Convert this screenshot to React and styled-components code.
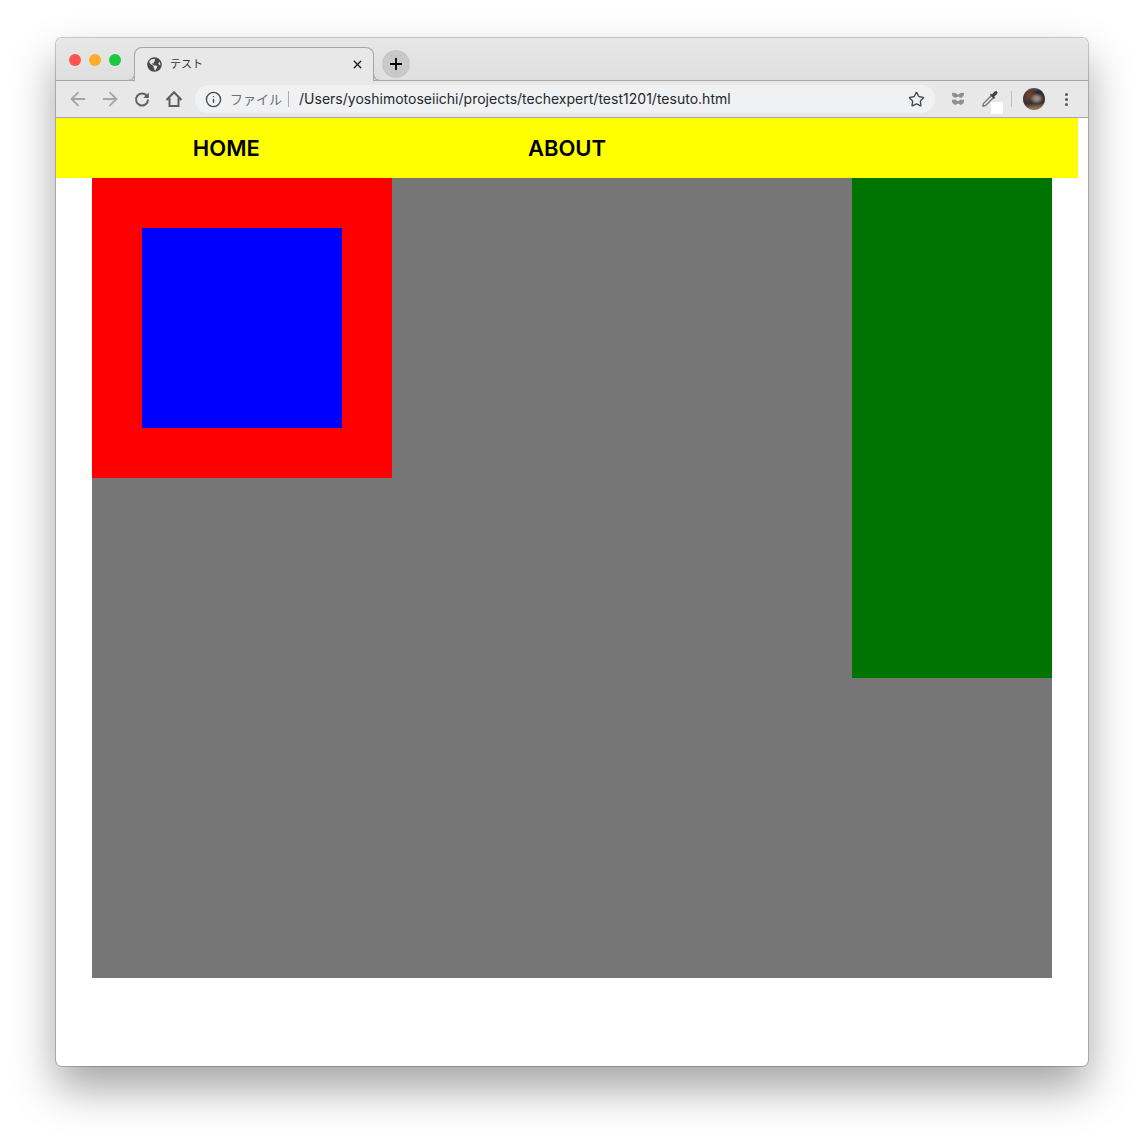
import React from 'react';
import styled, { createGlobalStyle } from 'styled-components';
import { ArrowLeft, ArrowRight, Info, Star, X, Plus } from 'lucide-react';
import { FaGlobeAmericas } from 'react-icons/fa';

const GlobalStyle = createGlobalStyle`
  html, body { margin: 0; padding: 0; background: #fff; }
  body { font-family: Inter, "Noto Sans CJK JP", sans-serif; }
`;

const Page = styled.div`
  width: 1144px;
  height: 1140px;
  padding: 38px 56px 74px;
  box-sizing: border-box;
  overflow: hidden;
`;

const Win = styled.div`
  width: 1032px;
  height: 1028px;
  background: #fff;
  border-radius: 6px;
  box-shadow: 0 0 0 1px rgba(0, 0, 0, 0.2), 0 22px 44px rgba(0, 0, 0, 0.36);
`;

const TabStrip = styled.div`
  height: 43px;
  box-sizing: border-box;
  display: flex;
  background: linear-gradient(#e7e7e7, #dfdfdf);
  border-bottom: 1px solid #a6a6a6;
  border-radius: 6px 6px 0 0;
`;

const Lights = styled.div`
  width: 78px;
  box-sizing: border-box;
  padding: 16px 0 0 13px;
  display: flex;
  gap: 8px;
`;

const Light = styled.span`
  width: 12px;
  height: 12px;
  border-radius: 50%;
  background: ${p => p.$color};
`;

const Tab = styled.div`
  position: relative;
  width: 240px;
  height: 34px;
  margin-top: 9px;
  box-sizing: border-box;
  padding: 0 9px 0 12px;
  display: flex;
  align-items: center;
  background: #e8e8e8;
  border: 1px solid #a6a6a6;
  border-bottom: none;
  border-radius: 8px 8px 0 0;
  color: #46484c;

  &::before, &::after {
    content: '';
    position: absolute;
    bottom: 0;
    width: 7px;
    height: 7px;
    background: #dfdfdf;
    border-bottom: 1px solid #a6a6a6;
  }
  &::before {
    left: -8px;
    border-right: 1px solid #a6a6a6;
    border-radius: 0 0 7px 0;
  }
  &::after {
    right: -8px;
    border-left: 1px solid #a6a6a6;
    border-radius: 0 0 0 7px;
  }
`;

const TabTitle = styled.span`
  flex: 1;
  margin: 0 0 4px 8px;
  font: 11px "Noto Sans CJK JP", sans-serif;
  color: #333;
`;

const NewTab = styled.div`
  width: 28px;
  height: 28px;
  margin: 12px 0 0 8px;
  border-radius: 50%;
  background: #c9c9c9;
  display: flex;
  align-items: center;
  justify-content: center;
`;

const Toolbar = styled.div`
  height: 37px;
  box-sizing: border-box;
  padding-left: 6px;
  display: flex;
  align-items: center;
  background: #e8e8e8;
  border-bottom: 1px solid #a6a6a6;
`;

const ToolBtn = styled.div`
  position: relative;
  width: 32px;
  height: 32px;
  flex: none;
  display: flex;
  align-items: center;
  justify-content: center;
  color: ${p => p.$color || '#5b5e62'};
`;

const Address = styled.div`
  width: 740px;
  height: 28px;
  margin: 0 7px 0 5px;
  box-sizing: border-box;
  padding: 0 10px 0 10px;
  flex: none;
  display: flex;
  align-items: center;
  background: #f0f1f3;
  border-radius: 14px;
  color: #46484c;
`;

const Scheme = styled.span`
  margin: 0 6px 2px 8px;
  font: 13px/15px "Noto Sans CJK JP", sans-serif;
  color: #6b6e72;
`;

const SchemeLine = styled.span`
  width: 1px;
  height: 16px;
  flex: none;
  background: #a9abae;
`;

const Url = styled.span`
  flex: 1;
  margin: 0 0 2px 10px;
  font: 14px Inter, sans-serif;
  letter-spacing: 0.01px;
  color: #26282b;
  white-space: nowrap;
`;

const WhiteBadge = styled.span`
  position: absolute;
  left: 17px;
  top: 19px;
  width: 12px;
  height: 12px;
  background: #fff;
  border-radius: 1px;
`;

const Sep = styled.span`
  width: 1px;
  height: 16px;
  margin: 0 11px 0 5px;
  background: #bdbdbd;
`;

const Avatar = styled.span`
  width: 22px;
  height: 22px;
  flex: none;
  border-radius: 50%;
  background:
    radial-gradient(ellipse at 62% 48%, #a09488 0, #8d8378 14%, transparent 34%),
    radial-gradient(circle at 30% 30%, #7a4630 0, transparent 35%),
    linear-gradient(175deg, #4e6a70 0, #2f2a2a 22%, #4a3330 48%, #3a3230 68%, #8a7350 88%);
`;

const Kebab = styled.div`
  width: 3px;
  margin-left: 20px;
  display: flex;
  flex-direction: column;
  gap: 2px;
  & > span {
    width: 3px;
    height: 3px;
    border-radius: 50%;
    background: #54575b;
  }
`;

const Nav = styled.ul`
  width: 1022px;
  height: 60px;
  margin: 0;
  padding: 0;
  list-style: none;
  display: grid;
  grid-template-columns: repeat(3, 1fr);
  background: #ff0;
`;

const NavItem = styled.li`
  text-align: center;
  font: 600 22px/60px Inter, sans-serif;
  color: #000;
`;

const Container = styled.div`
  width: 960px;
  height: 800px;
  margin-left: 36px;
  display: flex;
  justify-content: space-between;
  align-items: flex-start;
  background: #767676;
`;

const RedBox = styled.div`
  padding: 50px;
  background: #f00;
`;

const BlueBox = styled.div`
  width: 200px;
  height: 200px;
  background: #00f;
`;

const GreenBox = styled.div`
  width: 200px;
  height: 500px;
  background: #007400;
`;

const ReloadIcon = () => (
  <svg width="18" height="18" viewBox="0 0 18 18" fill="none">
    <path d="M14 6.200A6 6 0 1 0 15 9.500" stroke="currentColor" strokeWidth="2" />
    <path d="M15.800 2.500v5.500h-5.500z" fill="currentColor" />
  </svg>
);

const HomeIcon = () => (
  <svg width="18" height="18" viewBox="0 0 18 18" fill="none" stroke="currentColor" strokeWidth="2">
    <path d="M1.500 10 9 2.200 16.500 10M4.500 8v8h9V8" />
  </svg>
);

const ExtensionIcon = () => (
  <svg width="14" height="14" viewBox="0 0 14 14" fill="currentColor">
    <path d="M.8 1 4 .8l3 2L10 .8l3.200.2-.6 3L10 6 7 4.500 4 6 1.400 4z" />
    <path d="M.8 8 4 7.500l3 1.800 3-1.800 3.200.5-.6 3L10 13l-3-1.500L4 13l-2.600-2z" />
  </svg>
);

const Dropper = () => (
  <svg width="18" height="18" viewBox="0 0 18 18" fill="none">
    <path d="M10.500 5.500 2.500 13.500 2 16l2.500-.5L12.500 7.500" stroke="#77797c" strokeWidth="1.500" fill="#f4f4f4" />
    <path d="M9 5 13 9l1.200-1.200-1.100-1.100 2.900-2.800a1.600 1.600 0 0 0-2.300-2.300l-2.800 2.900-1-1z" fill="#3f4144" />
  </svg>
);

export default function App() {
  return (
    <Page>
      <GlobalStyle />
      <Win>
        <TabStrip>
          <Lights>
            <Light $color="#ff5350" />
            <Light $color="#fdad2a" />
            <Light $color="#1dc63f" />
          </Lights>
          <Tab>
            <FaGlobeAmericas size={15} />
            <TabTitle>テスト</TabTitle>
            <X size={13} strokeWidth={2.4} color="#111" />
          </Tab>
          <NewTab><Plus size={18} strokeWidth={2.4} color="#000" /></NewTab>
        </TabStrip>
        <Toolbar>
          <ToolBtn $color="#a3a5a8"><ArrowLeft size={22} strokeWidth={2} /></ToolBtn>
          <ToolBtn $color="#a3a5a8"><ArrowRight size={22} strokeWidth={2} /></ToolBtn>
          <ToolBtn><ReloadIcon /></ToolBtn>
          <ToolBtn><HomeIcon /></ToolBtn>
          <Address>
            <Info size={17} strokeWidth={1.9} />
            <Scheme>ファイル</Scheme>
            <SchemeLine />
            <Url>/Users/yoshimotoseiichi/projects/techexpert/test1201/tesuto.html</Url>
            <Star size={17} strokeWidth={1.9} />
          </Address>
          <ToolBtn $color="#8e8f91"><ExtensionIcon /></ToolBtn>
          <ToolBtn>
            <Dropper />
            <WhiteBadge />
          </ToolBtn>
          <Sep />
          <Avatar />
          <Kebab><span /><span /><span /></Kebab>
        </Toolbar>
        <Nav>
          <NavItem>HOME</NavItem>
          <NavItem>ABOUT</NavItem>
        </Nav>
        <Container>
          <RedBox><BlueBox /></RedBox>
          <GreenBox />
        </Container>
      </Win>
    </Page>
  );
}
